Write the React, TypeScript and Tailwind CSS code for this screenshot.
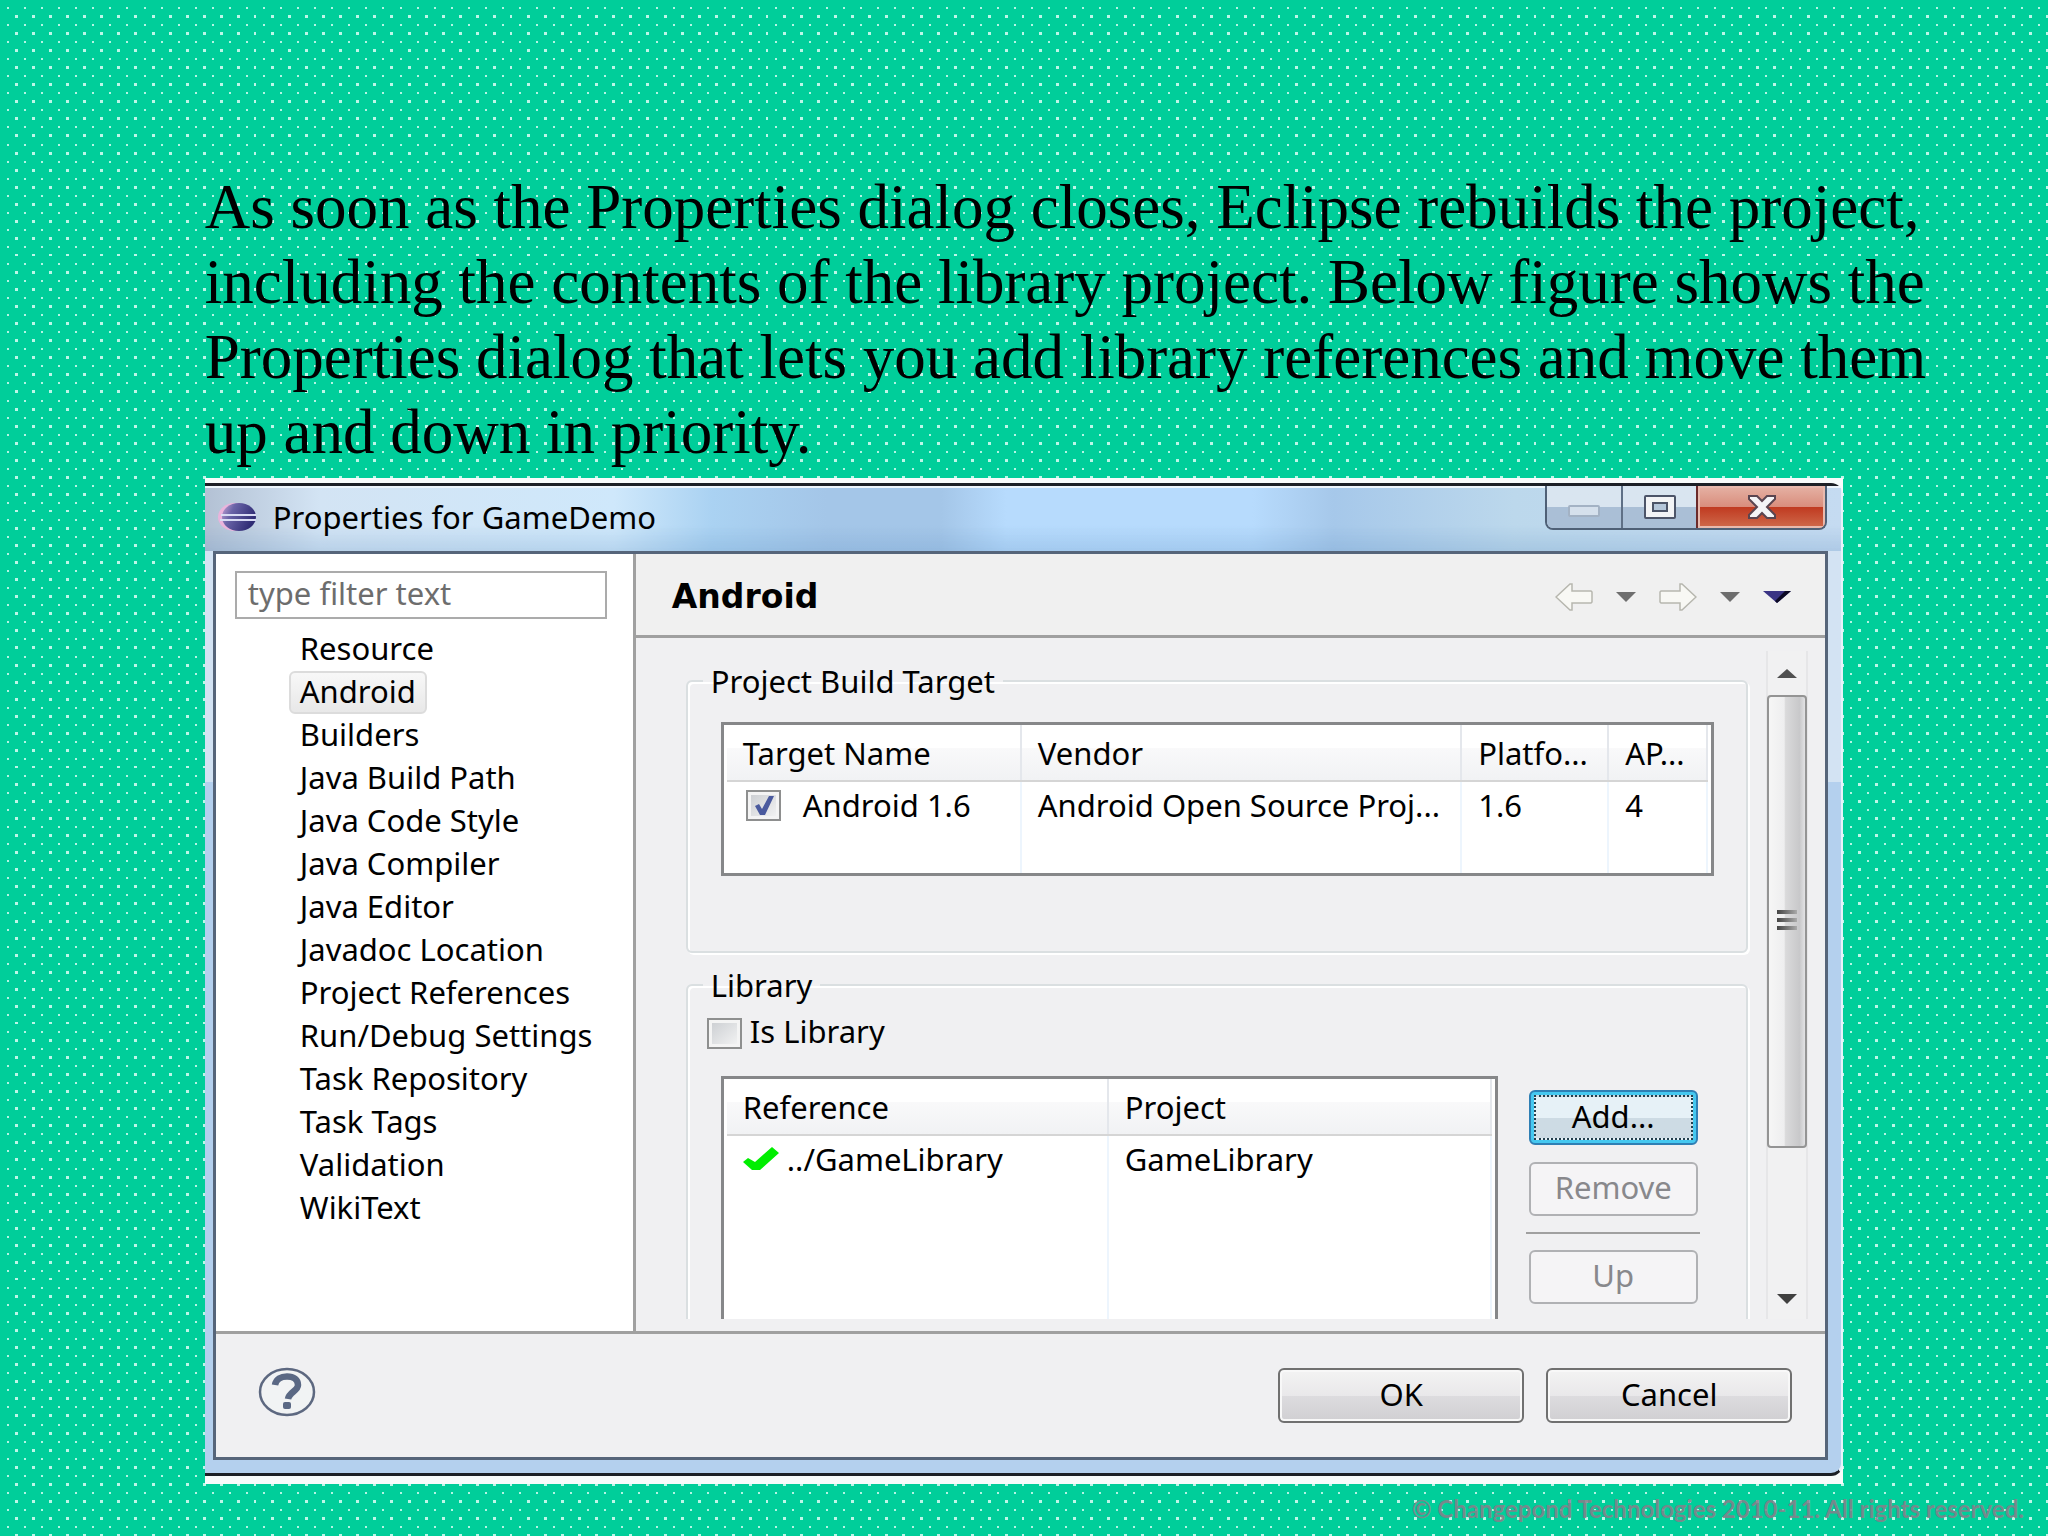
import type { ReactNode } from 'react';

const CATEGORIES = [
  'Resource',
  'Android',
  'Builders',
  'Java Build Path',
  'Java Code Style',
  'Java Compiler',
  'Java Editor',
  'Javadoc Location',
  'Project References',
  'Run/Debug Settings',
  'Task Repository',
  'Task Tags',
  'Validation',
  'WikiText',
];

const HEAD_CELL =
  'h-[56px] border-r-2 border-b-2 border-r-[#e4e7ec] border-b-[#d5d5d5] bg-[linear-gradient(white_42%,#f9f9fa_42%,#f1f2f4)] text-left font-normal whitespace-nowrap';
const BODY_CELL = 'border-r-2 border-r-[#edf5fd] align-top whitespace-nowrap';

const TILE = 256;
const DOTS_PER_TILE = 15;

// 15 dots don't divide 256 evenly, so each one is rounded to a whole pixel
function DotPattern() {
  const steps = Array.from({ length: DOTS_PER_TILE }, (_, i) => (i * TILE) / DOTS_PER_TILE);
  return (
    <svg className="absolute inset-0 h-full w-full" aria-hidden="true">
      <defs>
        <pattern id="dots" width={TILE} height={TILE} patternUnits="userSpaceOnUse">
          {steps.map((y) =>
            steps.map((x) => (
              <g key={`${x}-${y}`}>
                <rect x={Math.round(x + 7)} y={Math.round(y + 7)} width="2" height="2" fill="#b4f5e4" />
                <rect x={Math.round(x + 15)} y={Math.round(y + 15)} width="3" height="3" fill="#bdf6e8" />
              </g>
            )),
          )}
        </pattern>
      </defs>
      <rect width="100%" height="100%" fill="url(#dots)" />
    </svg>
  );
}

function EclipseLogo() {
  return (
    <svg className="h-[30px] w-[40px]" viewBox="0 0 40 30" aria-hidden="true">
      <defs>
        <linearGradient id="eclipse" x1="0" x2="1" y1="0" y2="0.4">
          <stop offset="0" stopColor="#c9a6d6" />
          <stop offset="0.35" stopColor="#6a64a8" />
          <stop offset="1" stopColor="#2f2c74" />
        </linearGradient>
      </defs>
      <ellipse cx="18" cy="15" rx="17" ry="14" fill="#eab4dc" />
      <ellipse cx="22" cy="15" rx="17" ry="14" fill="url(#eclipse)" />
      <path d="M4 13H39M3 18H39" stroke="#d9dcf4" strokeWidth="2" />
    </svg>
  );
}

function MinimizeIcon() {
  return (
    <svg className="h-[12px] w-[32px]" viewBox="0 0 32 12" aria-hidden="true">
      <rect x="1" y="1" width="30" height="10" rx="1" fill="#d5e0ec" stroke="#a3b2c4" strokeWidth="2" />
    </svg>
  );
}

function MaximizeIcon() {
  return (
    <svg className="h-[24px] w-[32px]" viewBox="0 0 32 24" aria-hidden="true">
      <rect x="1" y="1" width="30" height="22" rx="1" fill="#f2f3f5" stroke="#4c5468" strokeWidth="2" />
      <rect x="9" y="8" width="14" height="8" fill="#b4c6da" stroke="#4c5468" strokeWidth="2" />
    </svg>
  );
}

function CloseIcon() {
  return (
    <svg className="h-[24px] w-[30px]" viewBox="0 0 30 24" aria-hidden="true">
      <path
        d="M2 1H10L15 6L20 1H28V4L20 12L28 20V23H20L15 18L10 23H2V20L10 12L2 4Z"
        fill="#f4f4f6"
        stroke="#5a4550"
        strokeWidth="2"
      />
    </svg>
  );
}

function ArrowIcon({ flip = false }: { flip?: boolean }) {
  return (
    <svg className="h-[28px] w-[38px]" viewBox="0 0 38 28" aria-hidden="true">
      <path
        d={
          flip
            ? 'M37 14L23 1H21V8H2L1 9V19L2 20H21V27H23Z'
            : 'M1 14L15 1H17V8H36L37 9V19L36 20H17V27H15Z'
        }
        fill="#f8f8f4"
        stroke="#b6b6ae"
        strokeWidth="1.500"
      />
    </svg>
  );
}

function Triangle({ color }: { color: string }) {
  return (
    <svg className="h-[10px] w-[20px]" viewBox="0 0 20 10" aria-hidden="true">
      <path d="M0 0H20L10 10Z" fill={color} />
    </svg>
  );
}

function CheckBox({ id, label, checked = false }: { id: string; label?: string; checked?: boolean }) {
  return (
    <span className="grid">
      <input
        id={id}
        type="checkbox"
        defaultChecked={checked}
        aria-label={label}
        className="h-[31px] w-[35px] appearance-none border-2 border-[#8e8f8f] bg-linear-to-br from-[#c9ccd0] to-[#f6f6f6] shadow-[inset_0_0_0_3px_#f4f4f4] [grid-area:1/1]"
      />
      {checked && (
        <svg
          className="pointer-events-none h-[31px] w-[35px] [grid-area:1/1]"
          viewBox="0 0 35 31"
          aria-hidden="true"
        >
          <path d="M9 16L13 14L16 19L23 6H28L19 25H14Z" fill="#4a5a9e" />
        </svg>
      )}
    </span>
  );
}

function GroupBox({ title, className, children }: { title: string; className: string; children: ReactNode }) {
  return (
    <fieldset
      className={`rounded-md border-2 border-[#dadfe1] shadow-[inset_2px_2px_0_white,2px_2px_0_white] ${className}`}
    >
      <legend className="ml-[15px] h-[40px] px-2 leading-[40px]">{title}</legend>
      {children}
    </fieldset>
  );
}

function TitleBar() {
  return (
    <header className="flex h-[65px] items-start bg-[linear-gradient(transparent_60%,rgba(90,140,190,0.22)),linear-gradient(90deg,#b3c1d4,#d3e4f4_7%,#cfe8fb_25%,#aad2f2_31%,#a4c6e8_38%,#a4c6e8_45%,#b7dbfd_49%,#b7dbfd_64%,#a6c8ea_69%,#bcd8ec_80%,#c5dbf1)] shadow-[inset_0_2px_0_#eef6fc]">
      <div className="flex h-[62px] flex-1 items-center gap-4 pl-3">
        <EclipseLogo />
        <h1>Properties for GameDemo</h1>
      </div>
      <div className="mr-[14px] flex h-[44px] overflow-hidden rounded-b-lg border-2 border-t-0 border-[#4f6076]">
        <button
          aria-label="Minimize"
          className="flex w-[76px] items-center justify-center border-r-2 border-[#5f7086] bg-linear-to-b from-[#d9e5f0] from-50% to-[#aabfd6] to-50% pt-2"
        >
          <MinimizeIcon />
        </button>
        <button
          aria-label="Maximize"
          className="flex w-[73px] items-center justify-center bg-linear-to-b from-[#d9e5f0] from-50% to-[#aabfd6] to-50%"
        >
          <MaximizeIcon />
        </button>
        <button
          aria-label="Close"
          className="flex w-[129px] items-center justify-center border-l-2 border-[#6b2a2a] bg-[linear-gradient(#e5b2a5,#d98d7c_50%,#c03a20_50%,#cf6a4c)] shadow-[inset_0_0_0_2px_#e8b9ad]"
        >
          <CloseIcon />
        </button>
      </div>
    </header>
  );
}

function CategoryList() {
  return (
    <aside className="w-[420px] shrink-0 border-r-3 border-[#a0a0a0] bg-white pt-[17px] pl-[19px]">
      <input
        type="text"
        aria-label="Filter"
        placeholder="type filter text"
        className="h-[48px] w-[372px] border-2 border-[#ababab] px-[11px] pb-1 placeholder:text-[#6d6d6d]"
      />
      <ul className="mt-[9px] ml-[54px]">
        {CATEGORIES.map((name) => (
          <li key={name} className="flex h-[43px]">
            <a
              href="#"
              className={`flex items-center rounded-md border-2 px-[9px] pb-1 leading-[36px] ${
                name === 'Android'
                  ? 'border-[#dcdcdc] bg-linear-to-b from-[#f8f8f8] to-[#e8e8e8]'
                  : 'border-transparent'
              }`}
            >
              {name}
            </a>
          </li>
        ))}
      </ul>
    </aside>
  );
}

function TargetTable() {
  return (
    <table className="h-[148px] w-full table-fixed">
      <colgroup>
        <col className="w-[294px]" />
        <col />
        <col className="w-[147px]" />
        <col className="w-[99px]" />
      </colgroup>
      <thead>
        <tr>
          <th className={`${HEAD_CELL} pl-[16px]`}>Target Name</th>
          <th className={`${HEAD_CELL} pl-[16px]`}>Vendor</th>
          <th className={`${HEAD_CELL} pl-[16px]`}>Platfo...</th>
          <th className={`${HEAD_CELL} pl-[16px]`}>AP...</th>
        </tr>
      </thead>
      <tbody>
        <tr>
          <td className={`${BODY_CELL} pl-[19px]`}>
            <div className="flex items-center gap-[22px] pt-1">
              <CheckBox id="target-16" label="Android 1.6" checked />
              Android 1.6
            </div>
          </td>
          <td className={`${BODY_CELL} pt-1 pl-[16px]`}>Android Open Source Proj...</td>
          <td className={`${BODY_CELL} pt-1 pl-[16px]`}>1.6</td>
          <td className={`${BODY_CELL} pt-1 pl-[16px]`}>4</td>
        </tr>
      </tbody>
    </table>
  );
}

function LibraryTable() {
  return (
    <table className="h-[300px] w-full table-fixed">
      <colgroup>
        <col className="w-[381px]" />
        <col />
      </colgroup>
      <thead>
        <tr>
          <th className={`${HEAD_CELL} pl-[16px]`}>Reference</th>
          <th className={`${HEAD_CELL} pl-[16px]`}>Project</th>
        </tr>
      </thead>
      <tbody>
        <tr>
          <td className={`${BODY_CELL} pl-[16px]`}>
            <div className="flex items-center gap-[8px] pt-1">
              <svg className="h-[24px] w-[36px]" viewBox="0 0 36 24" aria-hidden="true">
                <path d="M0 15L5 11L12 15L29 0L36 6L17 23H9Z" fill="#00ee00" />
              </svg>
              ../GameLibrary
            </div>
          </td>
          <td className={`${BODY_CELL} pt-1 pl-[16px]`}>GameLibrary</td>
        </tr>
      </tbody>
    </table>
  );
}

function ScrollBar() {
  return (
    <div className="flex w-[42px] shrink-0 flex-col items-center border-x-2 border-[#e6e6e8] bg-[#f1f1f2]">
      <button aria-label="Scroll up" className="flex h-[44px] items-center justify-center">
        <svg className="h-[9px] w-[20px]" viewBox="0 0 20 9" aria-hidden="true">
          <path d="M0 9H20L10 0Z" fill="#505050" />
        </svg>
      </button>
      <div className="flex h-[453px] w-[40px] flex-col items-center justify-center gap-[4px] rounded-sm border-2 border-[#949494] bg-[linear-gradient(90deg,#f6f6f6,#eeeeef_42%,#dadadb_46%,#c8c8ca_85%,#e2e2e4)] pb-1">
        <span className="h-[4px] w-[20px] bg-linear-to-r from-[#444] to-[#aaa]" />
        <span className="h-[4px] w-[20px] bg-linear-to-r from-[#444] to-[#aaa]" />
        <span className="h-[4px] w-[20px] bg-linear-to-r from-[#444] to-[#aaa]" />
      </div>
      <button aria-label="Scroll down" className="mt-auto flex h-[40px] items-center justify-center">
        <Triangle color="#404040" />
      </button>
    </div>
  );
}

function AndroidPage() {
  return (
    <section className="flex min-w-0 flex-1 flex-col">
      <div className="flex h-[84px] items-center border-b-3 border-[#a0a0a0] bg-[#f0f0f0] pr-[34px] pl-[36px]">
        <h2 className="flex-1 pt-1 font-['DejaVu_Sans',sans-serif] text-[33px] font-bold">Android</h2>
        <div className="flex items-center gap-[23px] pt-1">
          <button aria-label="Back" disabled>
            <ArrowIcon />
          </button>
          <button aria-label="Back history">
            <Triangle color="#6e6e6e" />
          </button>
          <button aria-label="Forward" disabled>
            <ArrowIcon flip />
          </button>
          <button aria-label="Forward history">
            <Triangle color="#6e6e6e" />
          </button>
          <button aria-label="View menu">
            <svg className="h-[12px] w-[28px]" viewBox="0 0 28 12" aria-hidden="true">
              <path d="M0 0H28L14 12Z" fill="#3a3484" />
              <path d="M22 0H28L14 12L12 10Z" fill="#0c0a24" />
            </svg>
          </button>
        </div>
      </div>

      <div className="mt-[13px] mr-[17px] mb-[12px] ml-[50px] flex h-[668px] overflow-hidden">
        <div className="mr-[18px] flex min-w-0 flex-1 flex-col gap-[12px] pt-[10px]">
          <GroupBox title="Project Build Target" className="h-[292px] shrink-0">
            <div className="mt-[21px] mr-[32px] ml-[33px] border-3 border-[#868789] bg-white px-[3px]">
              <TargetTable />
            </div>
          </GroupBox>

          <GroupBox title="Library" className="h-[500px] shrink-0">
            <div className="mt-[10px] ml-[19px] flex h-[36px] items-center gap-2">
              <CheckBox id="is-library" />
              <label htmlFor="is-library" className="pb-1">
                Is Library
              </label>
            </div>
            <div className="mt-[25px] mr-[46px] ml-[33px] flex gap-[28px]">
              <div className="min-w-0 flex-1 border-3 border-[#868789] bg-white px-[3px]">
                <LibraryTable />
              </div>
              <div className="flex w-[174px] flex-col items-center pt-[14px]">
                <button className="h-[55px] w-[169px] rounded-md border-2 border-[#2f7fb4] bg-[#45c8f0] p-[3px]">
                  <span className="flex h-full items-center justify-center border-2 border-dotted border-[#24404e] bg-linear-to-b from-[#e6f1f7] from-50% to-[#cddbe4] to-50% pb-1">
                    Add...
                  </span>
                </button>
                <button
                  disabled
                  className="mt-[17px] h-[54px] w-[169px] rounded-md border-2 border-[#b0b1b4] bg-[#f5f4f6] pb-1 text-[#88888c]"
                >
                  Remove
                </button>
                <hr className="my-[16px] w-full border-t-2 border-[#a0a0a0]" />
                <button
                  disabled
                  className="h-[54px] w-[169px] rounded-md border-2 border-[#b0b1b4] bg-[#f5f4f6] pb-1 text-[#88888c]"
                >
                  Up
                </button>
              </div>
            </div>
          </GroupBox>
        </div>
        <ScrollBar />
      </div>
    </section>
  );
}

function DialogFooter() {
  const button =
    'h-[55px] w-[246px] rounded-md border-2 border-[#707070] bg-[linear-gradient(#f3f3f3,#e9e8ea_50%,#dddcdf_50%,#d0cfd2)] pb-1 shadow-[inset_0_0_0_2px_#f8f8f8]';
  return (
    <footer className="flex h-[126px] items-center border-t-3 border-[#a0a0a0] pr-[33px] pl-[42px]">
      <button aria-label="Help" className="mr-auto mb-2">
        <svg className="h-[50px] w-[58px]" viewBox="0 0 58 50" aria-hidden="true">
          <ellipse cx="29" cy="25" rx="27" ry="23" fill="#f1f3f4" stroke="#5d6880" strokeWidth="2.500" />
          <path
            d="M17 18C18 12 23 9.500 29 9.500C36 9.500 40 13 40 18C40 24 31 25 30 32"
            fill="none"
            stroke="#5a6884"
            strokeWidth="6.500"
          />
          <rect x="25" y="35" width="8" height="7" rx="2" fill="#5a6884" />
        </svg>
      </button>
      <div className="flex gap-[22px]">
        <button className={button}>OK</button>
        <button className={button}>Cancel</button>
      </div>
    </footer>
  );
}

export default function App() {
  return (
    <main className="relative min-h-screen bg-[#00ce9a] text-black">
      <DotPattern />
      <div className="relative pt-[170px]">
        <p className="ml-[10%] w-[85%] font-['Liberation_Serif',serif] text-[63px] leading-[75px]">
          As soon as the Properties dialog closes, Eclipse rebuilds the project, including the contents of the
          library project. Below figure shows the Properties dialog that lets you add library references and
          move them up and down in priority.
        </p>

        <div className="mx-auto mt-[8px] w-4/5 bg-[#f8fbfb] pt-[5px] pb-[8px] font-['Noto_Sans',sans-serif] text-[31px] leading-[38px]">
          <div className="rounded-r-xl border-y-3 border-r-2 border-y-[#1c2026] border-r-[#e8f2fa] bg-linear-to-b from-[#d3e3f3] from-30% to-[#b4d0ee] to-30%">
            <TitleBar />
            <div className="mr-[13px] mb-[13px] ml-[8px] border-3 border-[#56657a] bg-[#f0f0f2]">
              <div className="flex">
                <CategoryList />
                <AndroidPage />
              </div>
              <DialogFooter />
            </div>
          </div>
        </div>

        <small className="mr-[24px] block text-right font-['Lato',sans-serif] text-[24px] leading-[50px] font-bold text-[#85808a]/90">
          © Changepond Technologies 2010-11. All rights reserved.
        </small>
      </div>
    </main>
  );
}
